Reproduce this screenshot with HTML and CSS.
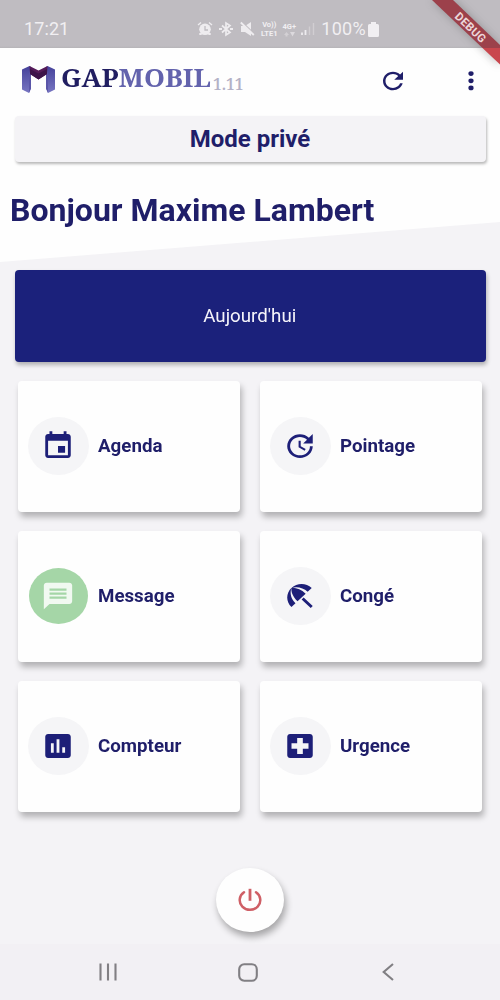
FILE: index.html
```html
<!DOCTYPE html>
<html lang="fr">
<head>
<meta charset="utf-8">
<title>GapMobil</title>
<link rel="stylesheet" href="styles.css">
</head>
<body>
<div class="screen">
  <div class="status">
    <span class="clock">17:21</span>
    <div class="status-right">
      <svg class="alarm" width="16" height="16" viewBox="0 0 16 16"><circle cx="8" cy="8.3" r="5.8" fill="#eeecef"/><path d="M3.5 12v2M12.5 12v2" stroke="#eeecef" stroke-width="2.4"/><path d="M1 4l3-2.500M15 4l-3-2.500" stroke="#eeecef" stroke-width="1.4"/><path d="M8 5v4h3" fill="none" stroke="#bfbcc1" stroke-width="1.3"/></svg>
      <svg class="bt" width="14" height="16" viewBox="0 0 14 16"><path d="M3 4.500l8 7L7 14V2l4 2.500-8 7" fill="none" stroke="#eeecef" stroke-width="1.7"/><path d="M0 8h3M11 8h3" stroke="#eeecef" stroke-width="2"/></svg>
      <svg class="mute" width="15" height="16" viewBox="0 0 15 16"><path d="M1 5h4l6-4v14l-6-4H1z" fill="#eeecef"/><path d="M1.500 .5l13 12.500" stroke="#bfbcc1" stroke-width="1.300"/><path d="M.8 1.500l13 12.500" stroke="#eeecef" stroke-width="1.800"/></svg>
      <div class="net volte"><span>Vo))</span><span>LTE1</span></div>
      <div class="net lte"><span>4G+</span><svg width="11" height="6" viewBox="0 0 11 6"><path d="M0 4l2.500-3L5 4H3.500v1.500h-2V4z" fill="#d3d0d4"/><path d="M6 1h5L8.500 5.500z" fill="#dcd9dd"/></svg></div>
      <svg class="signal" width="14" height="14" viewBox="0 0 14 14"><path d="M1 10.500V13M4.500 8v5" stroke="#eeecef" stroke-width="1.8"/><path d="M8.500 4.500V13M12.500 1v12" stroke="#d1ced2" stroke-width="1.4"/></svg>
      <span class="percent">100%</span>
      <svg class="battery" width="11" height="15" viewBox="0 0 11 15"><path d="M3 0h5v2h1.500q1.500 0 1.500 1.500v10q0 1.500-1.500 1.500h-8Q0 15 0 13.500v-10Q0 2 1.500 2H3z" fill="#f1eff2"/></svg>
    </div>
  </div>
  <div class="hero">
    <header class="appbar">
      <svg class="logo" width="33" height="27" viewBox="0 0 33 27">
        <defs><linearGradient id="leg" x2="0" y2="1"><stop offset="0" stop-color="#45419a"/><stop offset="1" stop-color="#7876c2"/></linearGradient></defs>
        <path d="M0 3.500L7.500 0 9 1V22.500L7 27 0 23.500z" fill="url(#leg)"/><path d="M33 3.500L25.500 0 24 1V22.500l2 4.500 7-3.500z" fill="url(#leg)"/>
        <path d="M7 27V5l2 3v14.500zM26 27V5l-2 3v14.500z" fill="#5a55a8"/>
        <path d="M7.500 0l9 4.500 9-4.500L25 8l-8.500 5.500L8 8z" fill="#541a58"/><path d="M8 3l8.500 4.500L25 3v5l-8.500 5.500L8 8z" fill="#3d1249"/>
      </svg>
      <div class="brand"><span class="gap">GAP</span><span class="mobil">MOBIL</span></div>
      <span class="version">1.11</span>
      <svg class="refresh" width="30" height="28" viewBox="0 0 24 24" preserveAspectRatio="none"><path d="M17.650 6.350C16.200 4.900 14.210 4 12 4c-4.420 0-7.990 3.580-7.990 8s3.570 8 7.990 8c3.730 0 6.840-2.550 7.730-6h-2.080c-.82 2.330-3.040 4-5.650 4-3.310 0-6-2.690-6-6s2.690-6 6-6c1.660 0 3.140.69 4.220 1.780L13 11h7V4l-2.350 2.350z"/></svg>
      <svg class="more" width="6" height="20" viewBox="0 0 6 20"><ellipse cx="3" cy="2.600" rx="2.600" ry="2.400"/><ellipse cx="3" cy="9.800" rx="2.600" ry="2.400"/><ellipse cx="3" cy="16.900" rx="2.600" ry="2.400"/></svg>
    </header>
    <div class="mode"><span>Mode privé</span></div>
    <h1 class="hello">Bonjour Maxime Lambert</h1>
  </div>
  <main class="content">
    <div class="today"><span class="today-text">Aujourd'hui</span></div>
    <div class="grid">
      <div class="card"><div class="disc"><svg class="icon" viewBox="0 0 24 24" preserveAspectRatio="none"><path d="M17 12h-5v5h5v-5zM16 1v2H8V1H6v2H5c-1.110 0-1.990.9-1.990 2L3 19c0 1.100.89 2 2 2h14c1.100 0 2-.9 2-2V5c0-1.100-.9-2-2-2h-1V1h-2zm3 18H5V8h14v11z"/></svg></div><span class="label">Agenda</span></div>
      <div class="card"><div class="disc"><svg class="icon" viewBox="0 0 24 24" preserveAspectRatio="none"><path d="M21 10.120h-6.780l2.740-2.820c-2.730-2.700-7.150-2.800-9.880-.1-2.730 2.710-2.730 7.080 0 9.790s7.150 2.710 9.880 0C18.320 15.650 19 14.080 19 12.100h2c0 1.980-.88 4.550-2.640 6.290-3.510 3.480-9.210 3.480-12.720 0-3.500-3.470-3.530-9.110-.02-12.580s9.140-3.470 12.650 0L21 3v7.120zM12.500 8v4.250l3.500 2.080-.72 1.210L11 13V8h1.500z"/></svg></div><span class="label">Pointage</span></div>
      <div class="card"><div class="disc green"><svg class="icon" viewBox="0 0 24 24" preserveAspectRatio="none"><path d="M20 2H4c-1.100 0-2 .9-2 2v18l4-4h14c1.100 0 2-.9 2-2V4c0-1.100-.9-2-2-2zM18 14H6v-1.700h12v1.700zm0-3H6V9.300h12v1.700zm0-3H6V6.300h12v1.700z"/></svg></div><span class="label">Message</span></div>
      <div class="card"><div class="disc"><svg class="icon" viewBox="0 0 24 24" preserveAspectRatio="none"><path d="M13.127 14.560l1.430-1.430 6.440 6.443L19.570 21zm4.293-5.730l2.860-2.860c-3.950-3.950-10.350-3.960-14.300-.02 3.930-1.300 8.310-.25 11.440 2.880zM5.950 5.980c-3.940 3.950-3.930 10.350.02 14.300l2.860-2.860C5.700 14.290 4.650 9.910 5.950 5.980zm.02-.02l-.01.01c-.38 3.010 1.170 6.880 4.300 10.020l5.730-5.730c-3.130-3.130-7.010-4.680-10.020-4.300z"/></svg></div><span class="label">Congé</span></div>
      <div class="card"><div class="disc"><svg class="icon" viewBox="0 0 24 24" preserveAspectRatio="none"><path d="M19 3H5c-1.100 0-2 .9-2 2v14c0 1.100.9 2 2 2h14c1.100 0 2-.9 2-2V5c0-1.100-.9-2-2-2zM9 17H7v-7h2v7zm4 0h-2V7h2v10zm4 0h-2v-4h2v4z"/></svg></div><span class="label">Compteur</span></div>
      <div class="card"><div class="disc"><svg class="icon" viewBox="0 0 24 24" preserveAspectRatio="none"><path d="M19 3H5c-1.100 0-1.990.9-1.990 2L3 19c0 1.100.9 2 2 2h14c1.100 0 2-.9 2-2V5c0-1.100-.9-2-2-2zm-1 11h-4v4h-4v-4H6v-4h4V6h4v4h4v4z"/></svg></div><span class="label">Urgence</span></div>
    </div>
    <div class="power"><svg width="24" height="24" viewBox="0 0 24 24" fill="none" stroke="#cf5f66" stroke-width="2.500"><path d="M6 4.200A10.300 9.700 0 1 0 18 4.200" stroke-linecap="round"/><path d="M12 .8v12" stroke-width="2.800"/></svg></div>
  </main>
  <nav class="nav">
    <svg width="20" height="18" viewBox="0 0 20 18"><path d="M2.500 .5v17M10 .5v17M17.500 .5v17"/></svg>
    <svg class="home" width="20" height="19" viewBox="0 0 20 19"><rect x="1.200" y="1.200" width="17.600" height="16.600" rx="5"/></svg>
    <svg width="12" height="18" viewBox="0 0 12 18"><path d="M11 1L1.700 9 11 17"/></svg>
  </nav>
  <svg class="debug" width="90" height="80" viewBox="0 0 90 80">
    <defs><filter id="soft" x="-30%" y="-30%" width="160%" height="160%"><feGaussianBlur stdDeviation="4"/></filter></defs>
    <path d="M21 0H45L90 45V66z" fill="#555" opacity=".35" filter="url(#soft)"/>
    <path d="M22 0H43L90 45V48H72.500z" fill="#9c414b"/><path d="M72.500 48H90V64.500z" fill="#c9474e"/>
    <text transform="translate(60.500 27.500) rotate(43.500)" text-anchor="middle" y="4" textLength="38">DEBUG</text>
  </svg>
</div>
</body>
</html>
```
FILE: styles.css
```css
* { box-sizing: border-box; }
body { margin: 0; font-family: Roboto, "Liberation Sans", sans-serif; color: #1f1e69; }
svg { display: block; flex: none; }
.screen { position: relative; width: 500px; height: 1000px; overflow: hidden; display: flex; flex-direction: column; background: #f4f3f6; }
.status { height: 48px; flex: none; display: flex; align-items: center; justify-content: space-between; padding: 10px 121px 0 24px; background: linear-gradient(#bfbcc1 46px, #b6b4b8); color: #f1eff2; font-size: 18px; line-height: 20px; }
.clock { letter-spacing: .1px; }
.status-right { display: flex; align-items: center; }
.bt { margin-left: 6px; }
.mute { margin-left: 7px; }
.net { display: flex; flex-direction: column; font-size: 7.5px; line-height: 9px; font-weight: 700; align-items: center; }
.volte { margin-left: 5px; width: 18px; }
.lte { margin-left: 3px; width: 16px; }
.signal { margin-left: 4px; }
.percent { margin-left: 6px; letter-spacing: .3px; }
.battery { margin-left: 2px; }
.hero { height: 214px; flex: none; background: #fefefe; clip-path: polygon(0 0, 100% 0, 100% 174px, 0 100%); }
.appbar { height: 68px; display: flex; align-items: center; padding: 0 26px 4px 22px; }
.logo { margin-top: -1px; }
.brand { margin-left: 6px; width: 151px; font: 700 25.5px/30px "Noto Serif", "DejaVu Serif Condensed", "DejaVu Serif", serif; white-space: nowrap; margin-top: -6px; transform: scaleX(1.045); transform-origin: left; }
.gap { color: #211e61; }
.mobil { color: #6363ad; }
.version { width: 32px; margin-left: 1px; padding-top: 8px; font: 600 15.5px/18px "Noto Serif", "DejaVu Serif Condensed", serif; color: #b3b1c6; }
.refresh { margin: 1px 0 0 133px; fill: #1f1e69; }
.more { margin: 1px 0 0 60px; fill: #1f1e69; }
.mode { margin: 0 14px 0 15px; height: 46px; border-radius: 4px; display: flex; align-items: center; justify-content: center; background: #f4f3f6; box-shadow: 1px 2px 3px rgba(0,0,0,.28); font-size: 24px; font-weight: 700; line-height: 28px; }
.mode span { transform: translateX(-.5px); }
.hello { margin: 31px 0 0 10px; font-size: 30.5px; line-height: 36px; font-weight: 700; white-space: nowrap; transform: scaleX(1.05); transform-origin: left; }
.content { flex: 1; display: flex; flex-direction: column; align-items: center; padding-top: 8px; }
.today { width: 471px; height: 92px; border-radius: 4px; display: flex; align-items: center; justify-content: center; color: #f5f4fa; background: #1b217b; box-shadow: 1px 3px 4px rgba(0,0,0,.28); font-size: 18px; line-height: 20px; }
.today-text { transform: scaleX(1.04); padding-bottom: 1px; }
.grid { margin-top: 19px; display: grid; grid-template-columns: 222px 222px; grid-auto-rows: 131px; gap: 19px 20px; }
.card { display: flex; align-items: center; padding: 0 0 1px 10px; border-radius: 4px; background: #fefefe; box-shadow: 2px 5px 6px rgba(0,0,0,.27); }
.disc { width: 61px; height: 58px; border-radius: 50%; display: flex; align-items: center; justify-content: center; background: #f5f5f7; padding-right: 1px; }
.disc.green { width: 59px; height: 56px; margin: 0 1px; background: #a5d6a7; }
.icon { width: 34px; height: 32px; fill: #1d1f78; }
.green .icon { fill: #f1f9f1; }
.label { margin-left: 8.7px; font-size: 18px; line-height: 22px; font-weight: 700; transform: scaleX(1.04); transform-origin: left; }
.power { width: 68px; height: 64px; margin-top: 56px; border-radius: 50%; display: flex; align-items: center; justify-content: center; background: #fefefe; box-shadow: 2px 5px 7px rgba(0,0,0,.32); }
.nav { height: 56px; flex: none; display: flex; align-items: center; justify-content: space-between; padding: 0 106px 0 98px; background: #f2f0f4; }
.nav svg { fill: none; stroke: #817f83; stroke-width: 2.1; }
.nav .home { margin-right: 4px; }
.debug { position: absolute; right: 0; top: 0; }
.debug text { font: 700 11.5px Roboto, sans-serif; fill: #ecd6d9; }
```
